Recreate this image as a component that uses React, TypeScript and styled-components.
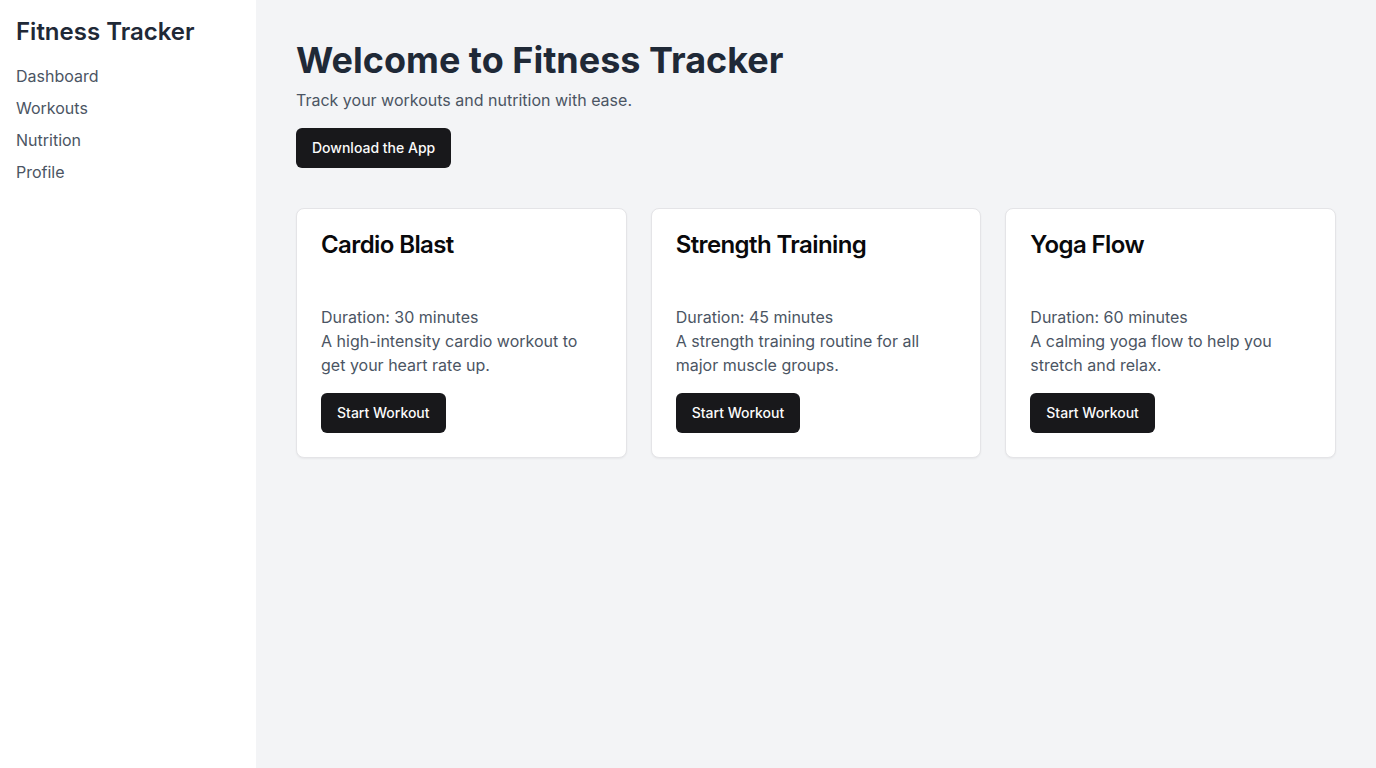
import React from "react";
import styled, { createGlobalStyle } from "styled-components";

const Global = createGlobalStyle`
  html, body { margin: 0; padding: 0; }
  body { font-family: Inter, "Noto Sans", sans-serif; background: #f3f4f6; }
  * { box-sizing: border-box; }
`;

const Layout = styled.div`
  display: flex;
  min-height: 768px;
`;

const Sidebar = styled.aside`
  width: 256px;
  flex-shrink: 0;
  background: #ffffff;
  padding: 16px;
`;

const Brand = styled.h2`
  margin: 0 0 16px;
  font-size: 24px;
  line-height: 32px;
  font-weight: 600;
  color: #1f2937;
`;

const Nav = styled.nav`
  display: flex;
  flex-direction: column;
  gap: 8px;
`;

const NavLink = styled.a`
  font-size: 16px;
  line-height: 24px;
  color: #4b5563;
  text-decoration: none;
`;

const Main = styled.main`
  flex: 1;
  padding: 40px;
  background: #f3f4f6;
`;

const Title = styled.h1`
  margin: 0;
  font-size: 36px;
  line-height: 40px;
  font-weight: 700;
  color: #1f2937;
`;

const Subtitle = styled.p`
  margin: 8px 0 16px;
  font-size: 16px;
  line-height: 24px;
  color: #4b5563;
`;

const Button = styled.button`
  height: 40px;
  padding: 0 16px;
  border: none;
  border-radius: 6px;
  background: #18181b;
  color: #fafafa;
  font-family: inherit;
  font-size: 14px;
  line-height: 20px;
  font-weight: 500;
  cursor: pointer;
`;

const Grid = styled.div`
  margin-top: 40px;
  display: grid;
  grid-template-columns: repeat(3, 1fr);
  gap: 24px;
`;

const Card = styled.div`
  background: #ffffff;
  border: 1px solid #e4e4e7;
  border-radius: 8px;
  box-shadow: 0 1px 2px rgba(0, 0, 0, 0.05);
`;

const CardHeader = styled.div`
  padding: 24px 24px 48px;
`;

const CardTitle = styled.h3`
  margin: 0;
  font-size: 24px;
  line-height: 24px;
  font-weight: 600;
  letter-spacing: -0.6px;
  color: #09090b;
`;

const CardBody = styled.div`
  padding: 0 24px 24px;
`;

const Text = styled.p`
  margin: 0;
  font-size: 16px;
  line-height: 24px;
  color: #4b5563;
`;

const CardButton = styled(Button)`
  margin-top: 16px;
`;

const workouts = [
  { title: "Cardio Blast", duration: 30, desc: "A high-intensity cardio workout to get your heart rate up." },
  { title: "Strength Training", duration: 45, desc: "A strength training routine for all major muscle groups." },
  { title: "Yoga Flow", duration: 60, desc: "A calming yoga flow to help you stretch and relax." },
];

export default function App() {
  return (
    <>
      <Global />
      <Layout>
        <Sidebar>
          <Brand>Fitness Tracker</Brand>
          <Nav>
            <NavLink href="#">Dashboard</NavLink>
            <NavLink href="#">Workouts</NavLink>
            <NavLink href="#">Nutrition</NavLink>
            <NavLink href="#">Profile</NavLink>
          </Nav>
        </Sidebar>
        <Main>
          <Title>Welcome to Fitness Tracker</Title>
          <Subtitle>Track your workouts and nutrition with ease.</Subtitle>
          <Button>Download the App</Button>
          <Grid>
            {workouts.map((w) => (
              <Card key={w.title}>
                <CardHeader>
                  <CardTitle>{w.title}</CardTitle>
                </CardHeader>
                <CardBody>
                  <Text>Duration: {w.duration} minutes</Text>
                  <Text>{w.desc}</Text>
                  <CardButton>Start Workout</CardButton>
                </CardBody>
              </Card>
            ))}
          </Grid>
        </Main>
      </Layout>
    </>
  );
}
